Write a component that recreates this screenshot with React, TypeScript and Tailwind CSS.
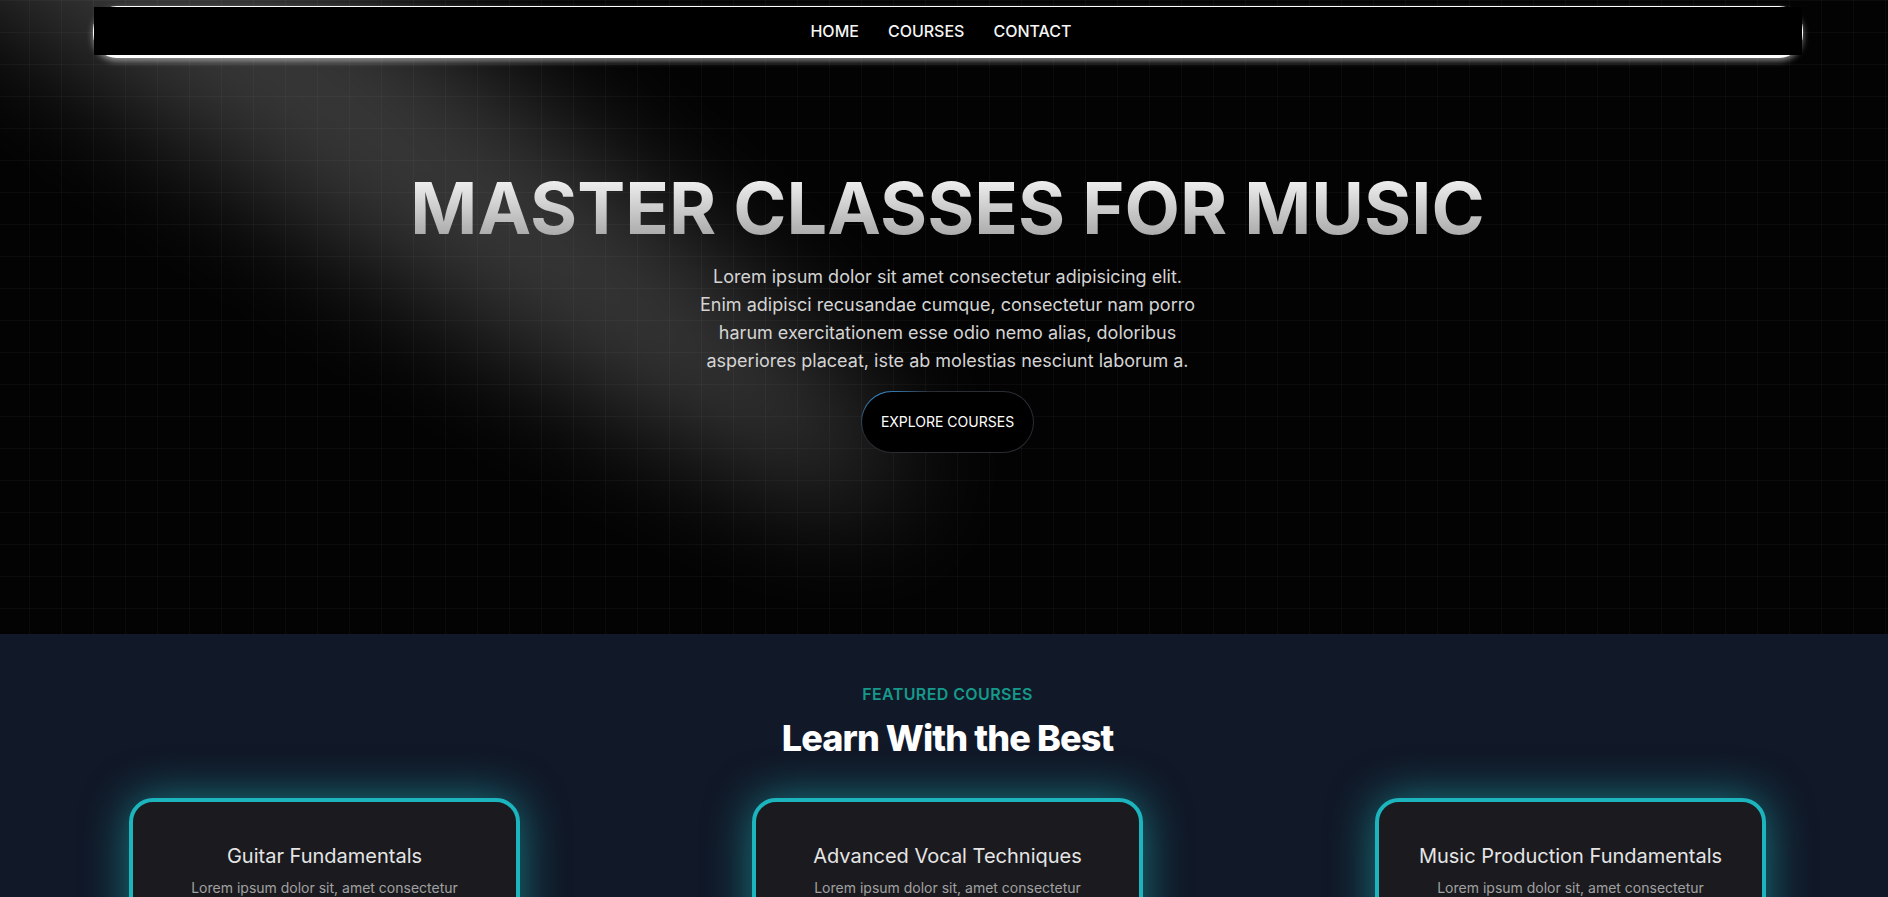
const courses = [
  {
    title: 'Guitar Fundamentals',
    description:
      'Lorem ipsum dolor sit, amet consectetur adipisicing elit. Explicabo, voluptatum. Learn chords, strumming and your first songs.',
  },
  {
    title: 'Advanced Vocal Techniques',
    description:
      'Lorem ipsum dolor sit, amet consectetur adipisicing elit. Explicabo, voluptatum. Breath control, range and stage presence.',
  },
  {
    title: 'Music Production Fundamentals',
    description:
      'Lorem ipsum dolor sit, amet consectetur adipisicing elit. Explicabo, voluptatum. Mixing, mastering and sound design.',
  },
];

function Spotlight() {
  return (
    <svg
      className="pointer-events-none absolute -top-20 left-60 z-[1] h-[1190px] w-[84%] -translate-x-1/2 -translate-y-[40%]"
      viewBox="0 0 3787 2842"
      fill="none"
    >
      <g filter="url(#spotlight-blur)">
        <ellipse
          cx="1924.71"
          cy="273.501"
          rx="1924.71"
          ry="273.501"
          transform="matrix(-0.822377 -0.568943 -0.568943 0.822377 3631.88 2291.09)"
          fill="white"
          fillOpacity="0.21"
        />
      </g>
      <defs>
        <filter
          id="spotlight-blur"
          x="0.860352"
          y="0.838989"
          width="3785.16"
          height="2840.26"
          filterUnits="userSpaceOnUse"
          colorInterpolationFilters="sRGB"
        >
          <feFlood floodOpacity="0" result="BackgroundImageFix" />
          <feBlend mode="normal" in="SourceGraphic" in2="BackgroundImageFix" result="shape" />
          <feGaussianBlur stdDeviation="151" result="blur" />
        </filter>
      </defs>
    </svg>
  );
}

export default function App() {
  return (
    <div className="min-h-screen bg-[#111827] font-['Inter',sans-serif]">
      {/* Navbar */}
      <div className="fixed left-[93px] top-[6px] z-50 w-[1710px] rounded-[24px] bg-white pb-[3px] shadow-[0_3px_6px_rgba(255,255,255,0.5)]">
        <nav className="mx-px mt-px flex h-12 items-center justify-center gap-[29px] bg-black pr-[14px] text-base font-medium text-neutral-100">
          <a href="#">HOME</a>
          <a href="#">COURSES</a>
          <a href="#">CONTACT</a>
        </nav>
      </div>

      {/* Hero */}
      <section className="relative h-[634px] w-full overflow-hidden bg-[#030303] bg-[linear-gradient(to_right,transparent_31px,rgba(255,255,255,0.03)_31px),linear-gradient(to_bottom,rgba(255,255,255,0.03)_1px,transparent_1px)] bg-[size:32px_32px] bg-[position:-2px_0]">
        <Spotlight />
        <div className="relative z-10 flex flex-col items-center pl-[7px] pt-[172px]">
          <h1 className="bg-linear-to-b from-neutral-50 to-neutral-400 bg-clip-text text-center text-7xl font-bold leading-none text-transparent">
            MASTER CLASSES FOR MUSIC
          </h1>
          <p className="mt-[19px] max-w-lg text-center text-lg leading-7 text-neutral-300">
            Lorem ipsum dolor sit amet consectetur adipisicing elit. Enim adipisci recusandae cumque,
            consectetur nam porro harum exercitationem esse odio nemo alias, doloribus asperiores placeat,
            iste ab molestias nesciunt laborum a.
          </p>
          <div className="mt-4 rounded-full bg-[#2a2c34] bg-[radial-gradient(28%_60%_at_12%_12%,#3b98dc_0%,rgba(59,152,220,0)_100%)] p-px">
            <button className="flex h-[60px] w-[171px] items-center justify-center rounded-full bg-black text-sm text-white">
              EXPLORE COURSES
            </button>
          </div>
        </div>
      </section>

      {/* Featured Courses */}
      <section className="bg-[#111827] pb-24 pl-[7px] pt-12">
        <div className="text-center">
          <p className="text-base font-semibold uppercase tracking-wide text-[#16998b]">Featured Courses</p>
          <h2 className="mt-3 text-4xl font-extrabold tracking-tight text-white">Learn With the Best</h2>
        </div>

        <div className="mt-10 grid grid-cols-[repeat(3,391px)] justify-center gap-x-[232px]">
          {courses.map((course) => (
            <div
              key={course.title}
              className="rounded-3xl border-4 border-[#1cb5bd] bg-[#1b1b1f] px-7 pb-10 pt-10 text-center shadow-[0_0_45px_rgba(28,181,189,0.6)]"
            >
              <h3 className="whitespace-nowrap text-xl text-neutral-200">{course.title}</h3>
              <p className="mx-auto mt-2 max-w-[303px] text-sm text-neutral-400">{course.description}</p>
              <button className="mt-6 rounded-full bg-[#1cb5bd] px-5 py-2 text-sm font-medium text-black">
                Learn More
              </button>
            </div>
          ))}
        </div>
      </section>
    </div>
  );
}
